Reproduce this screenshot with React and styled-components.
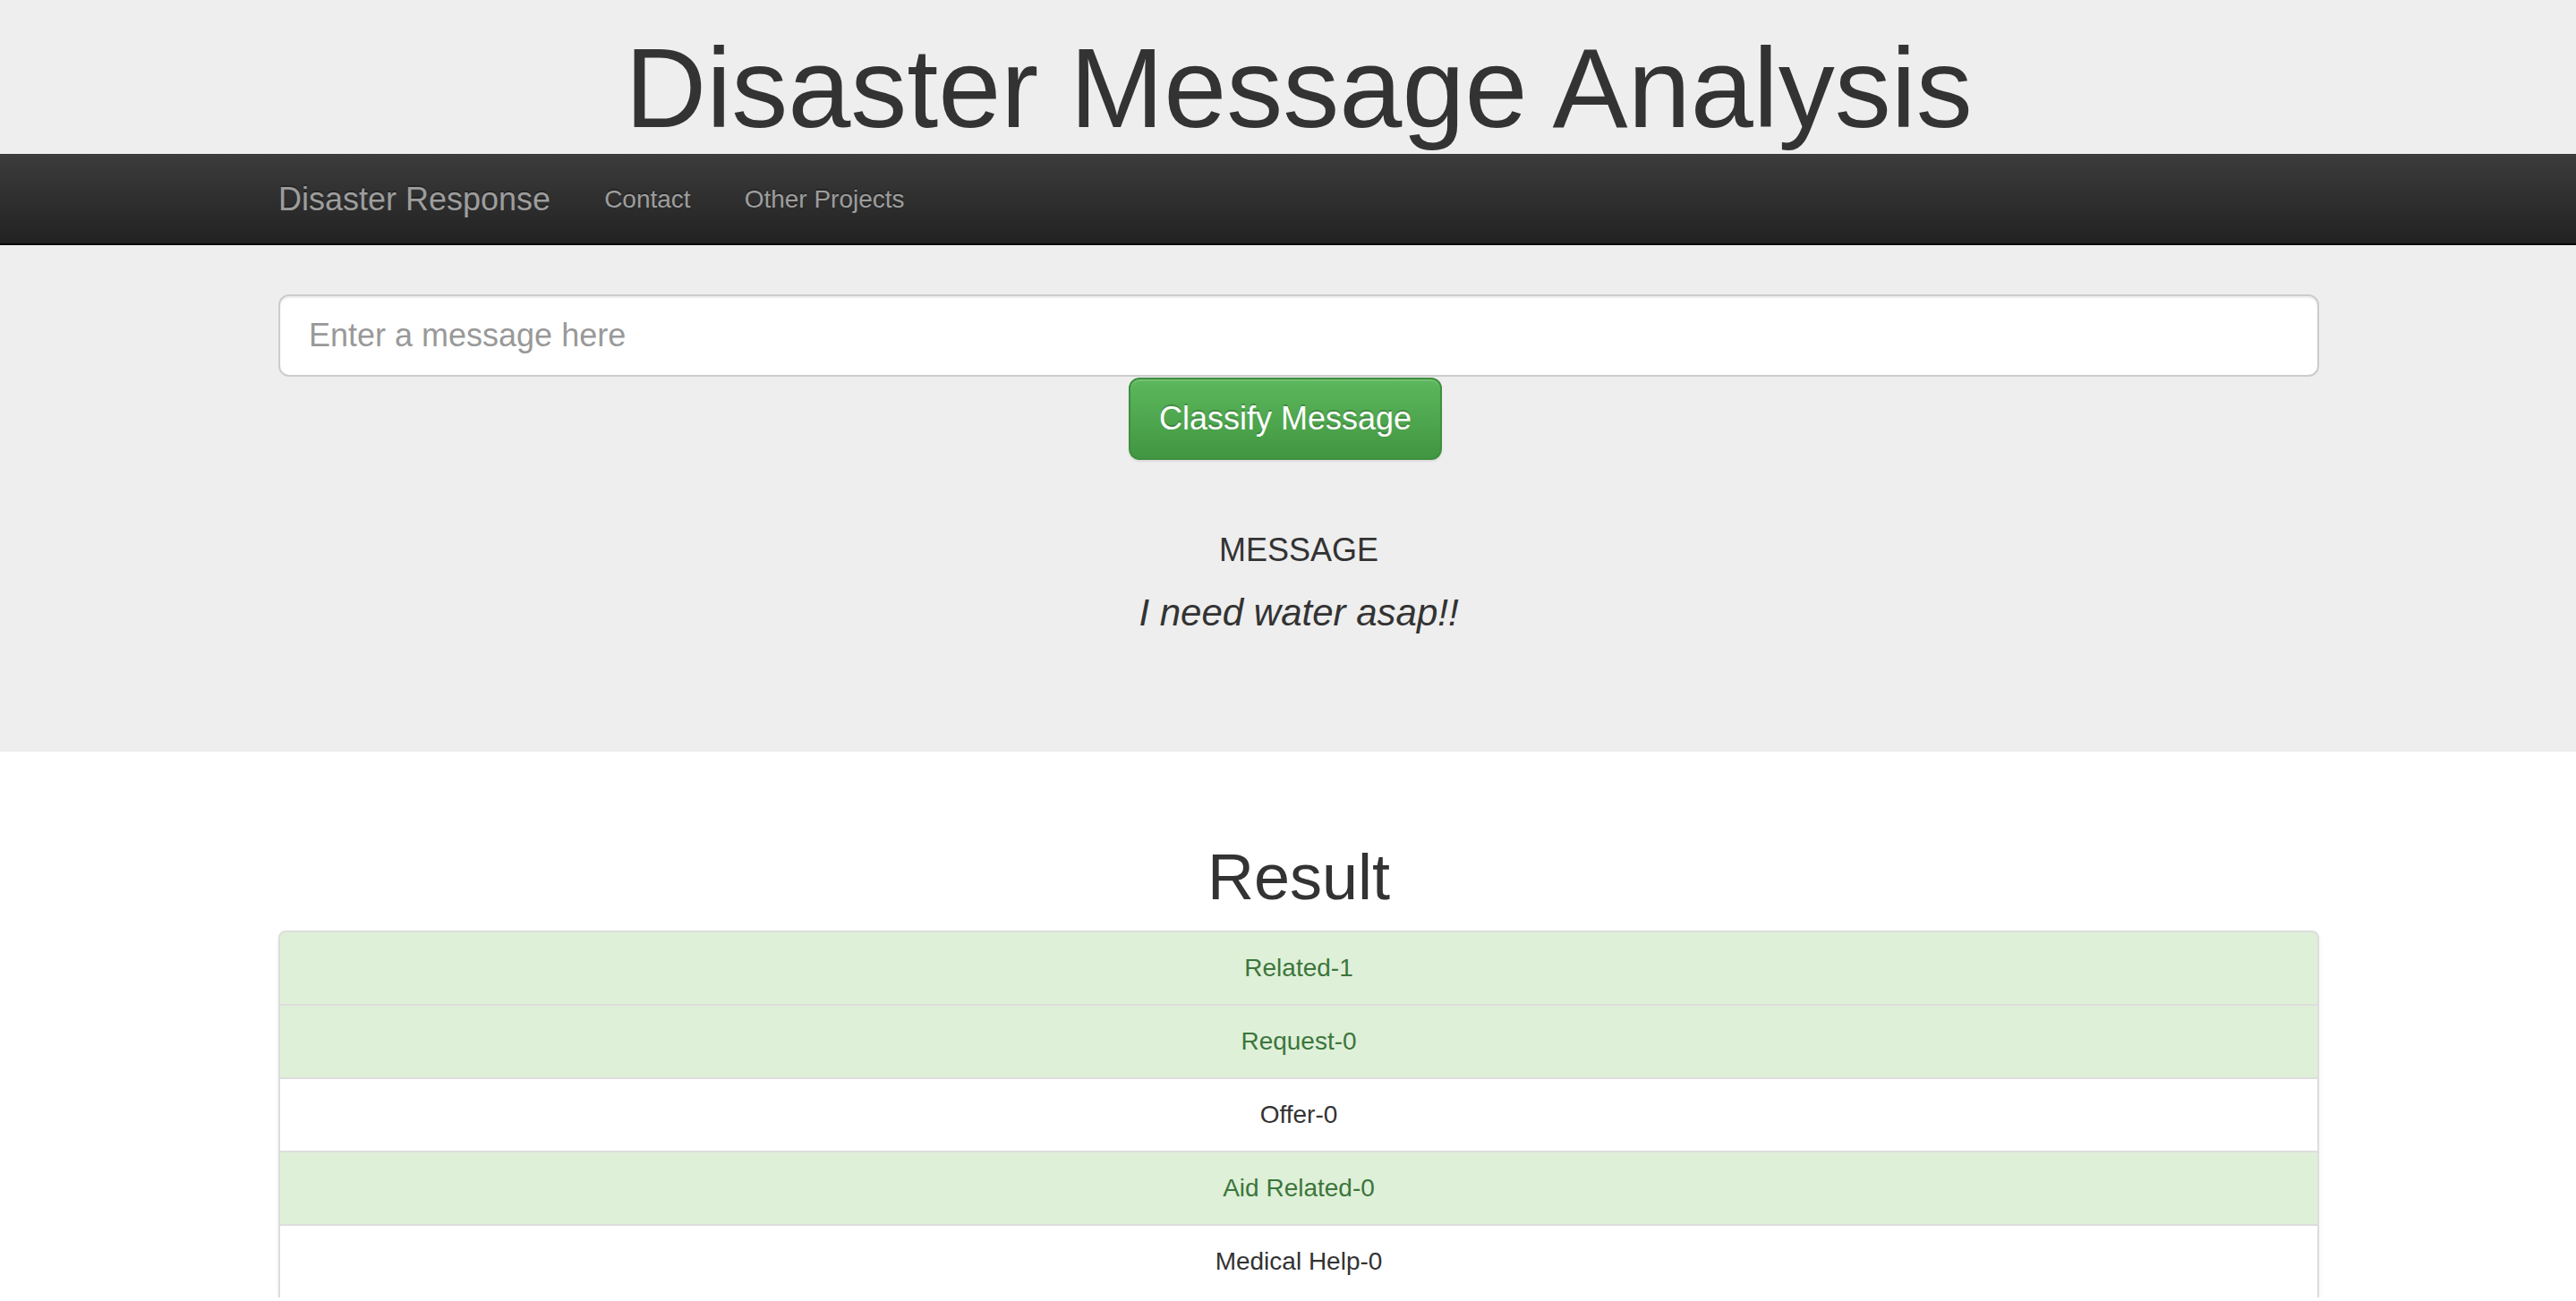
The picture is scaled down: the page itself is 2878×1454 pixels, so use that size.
import React from "react";
import styled, { createGlobalStyle } from "styled-components";

const GlobalStyle = createGlobalStyle`
  html, body {
    margin: 0;
    padding: 0;
    overflow: hidden;
    background: #fff;
  }
  body {
    font-family: "Liberation Sans", Arial, Helvetica, sans-serif;
    color: #333;
  }
  * { box-sizing: border-box; }
`;

const Page = styled.div`
  width: 2902px;
`;

const Jumbotron = styled.section`
  background: #eee;
  padding: 29px 0 132px;
`;

const Title = styled.h1`
  margin: 0 0 4px;
  font-size: 126px;
  line-height: 139px;
  font-weight: 400;
  text-align: center;
  color: #333;
`;

const Navbar = styled.nav`
  height: 102px;
  background-image: linear-gradient(to bottom, #3c3c3c 0, #222 100%);
  border-bottom: 2px solid #080808;
`;

const NavInner = styled.div`
  width: 2280px;
  margin: 0 auto;
  display: flex;
  align-items: center;
  height: 100px;
`;

const Brand = styled.a`
  font-size: 36px;
  line-height: 40px;
  padding: 31px 30px 29px 0;
  color: #9d9d9d;
  text-decoration: none;
  text-shadow: 0 -2px 0 rgba(0, 0, 0, 0.25);
`;

const NavLink = styled.a`
  font-size: 28px;
  line-height: 40px;
  padding: 31px 30px 29px;
  color: #9d9d9d;
  text-decoration: none;
  text-shadow: 0 -2px 0 rgba(0, 0, 0, 0.25);
`;

const Container = styled.div`
  width: 2280px;
  margin: 0 auto;
`;

const Form = styled.form`
  padding-top: 55px;
  display: flex;
  flex-direction: column;
`;

const Input = styled.input`
  width: 100%;
  height: 92px;
  padding: 20px 32px;
  font-family: inherit;
  font-size: 36px;
  line-height: 48px;
  color: #555;
  background: #fff;
  border: 2px solid #ccc;
  border-radius: 12px;
  box-shadow: inset 0 2px 2px rgba(0, 0, 0, 0.075);
  outline: none;
  &::placeholder {
    color: #999;
  }
`;

const ButtonRow = styled.div`
  display: flex;
  justify-content: center;
  padding-top: 1px;
`;

const SuccessButton = styled.button`
  margin-right: 30px;
  height: 92px;
  padding: 20px 32px;
  font-family: inherit;
  font-size: 36px;
  line-height: 48px;
  color: #fff;
  background-image: linear-gradient(to bottom, #5cb85c 0, #419641 100%);
  border: 2px solid #3e8f3e;
  border-radius: 12px;
  text-shadow: 0 -2px 0 rgba(0, 0, 0, 0.2);
  box-shadow: inset 0 2px 0 rgba(255, 255, 255, 0.15), 0 2px 2px rgba(0, 0, 0, 0.075);
  cursor: pointer;
`;

const MessageLabel = styled.h4`
  margin: 81px 0 0;
  font-size: 36px;
  line-height: 40px;
  font-weight: 400;
  text-align: center;
  color: #333;
`;

const MessageText = styled.p`
  margin: 27px 0 0;
  font-size: 42px;
  line-height: 46px;
  font-style: italic;
  text-align: center;
  color: #333;
`;

const ResultSection = styled.section`
  padding-top: 100px;
`;

const ResultTitle = styled.h1`
  margin: 0 0 20px;
  font-size: 72px;
  line-height: 80px;
  font-weight: 400;
  text-align: center;
  color: #333;
`;

const ListGroup = styled.ul`
  list-style: none;
  margin: 0;
  padding: 0;
  border-radius: 8px;
  box-shadow: 0 2px 4px rgba(0, 0, 0, 0.075);
`;

const ListItem = styled.li`
  display: block;
  padding: 20px 30px;
  margin-bottom: -2px;
  font-size: 28px;
  line-height: 40px;
  text-align: center;
  border: 2px solid #ddd;
  background: ${(p) => (p.$success ? "#dff0d8" : "#fff")};
  color: ${(p) => (p.$success ? "#3c763d" : "#333")};
  &:first-child {
    border-top-left-radius: 8px;
    border-top-right-radius: 8px;
  }
`;

const results = [
  ["Related-1", true],
  ["Request-0", true],
  ["Offer-0", false],
  ["Aid Related-0", true],
  ["Medical Help-0", false],
];

export default function App() {
  return (
    <Page>
      <GlobalStyle />
      <Jumbotron>
        <Title>Disaster Message Analysis</Title>
        <Navbar>
          <NavInner>
            <Brand href="#">Disaster Response</Brand>
            <NavLink href="#">Contact</NavLink>
            <NavLink href="#">Other Projects</NavLink>
          </NavInner>
        </Navbar>
        <Container>
          <Form onSubmit={(e) => e.preventDefault()}>
            <Input type="text" placeholder="Enter a message here" />
            <ButtonRow>
              <SuccessButton type="submit">Classify Message</SuccessButton>
            </ButtonRow>
          </Form>
          <MessageLabel>MESSAGE</MessageLabel>
          <MessageText>I need water asap!!</MessageText>
        </Container>
      </Jumbotron>
      <Container>
        <ResultSection>
          <ResultTitle>Result</ResultTitle>
          <ListGroup>
            {results.map(([label, success]) => (
              <ListItem key={label} $success={success}>
                {label}
              </ListItem>
            ))}
          </ListGroup>
        </ResultSection>
      </Container>
    </Page>
  );
}
